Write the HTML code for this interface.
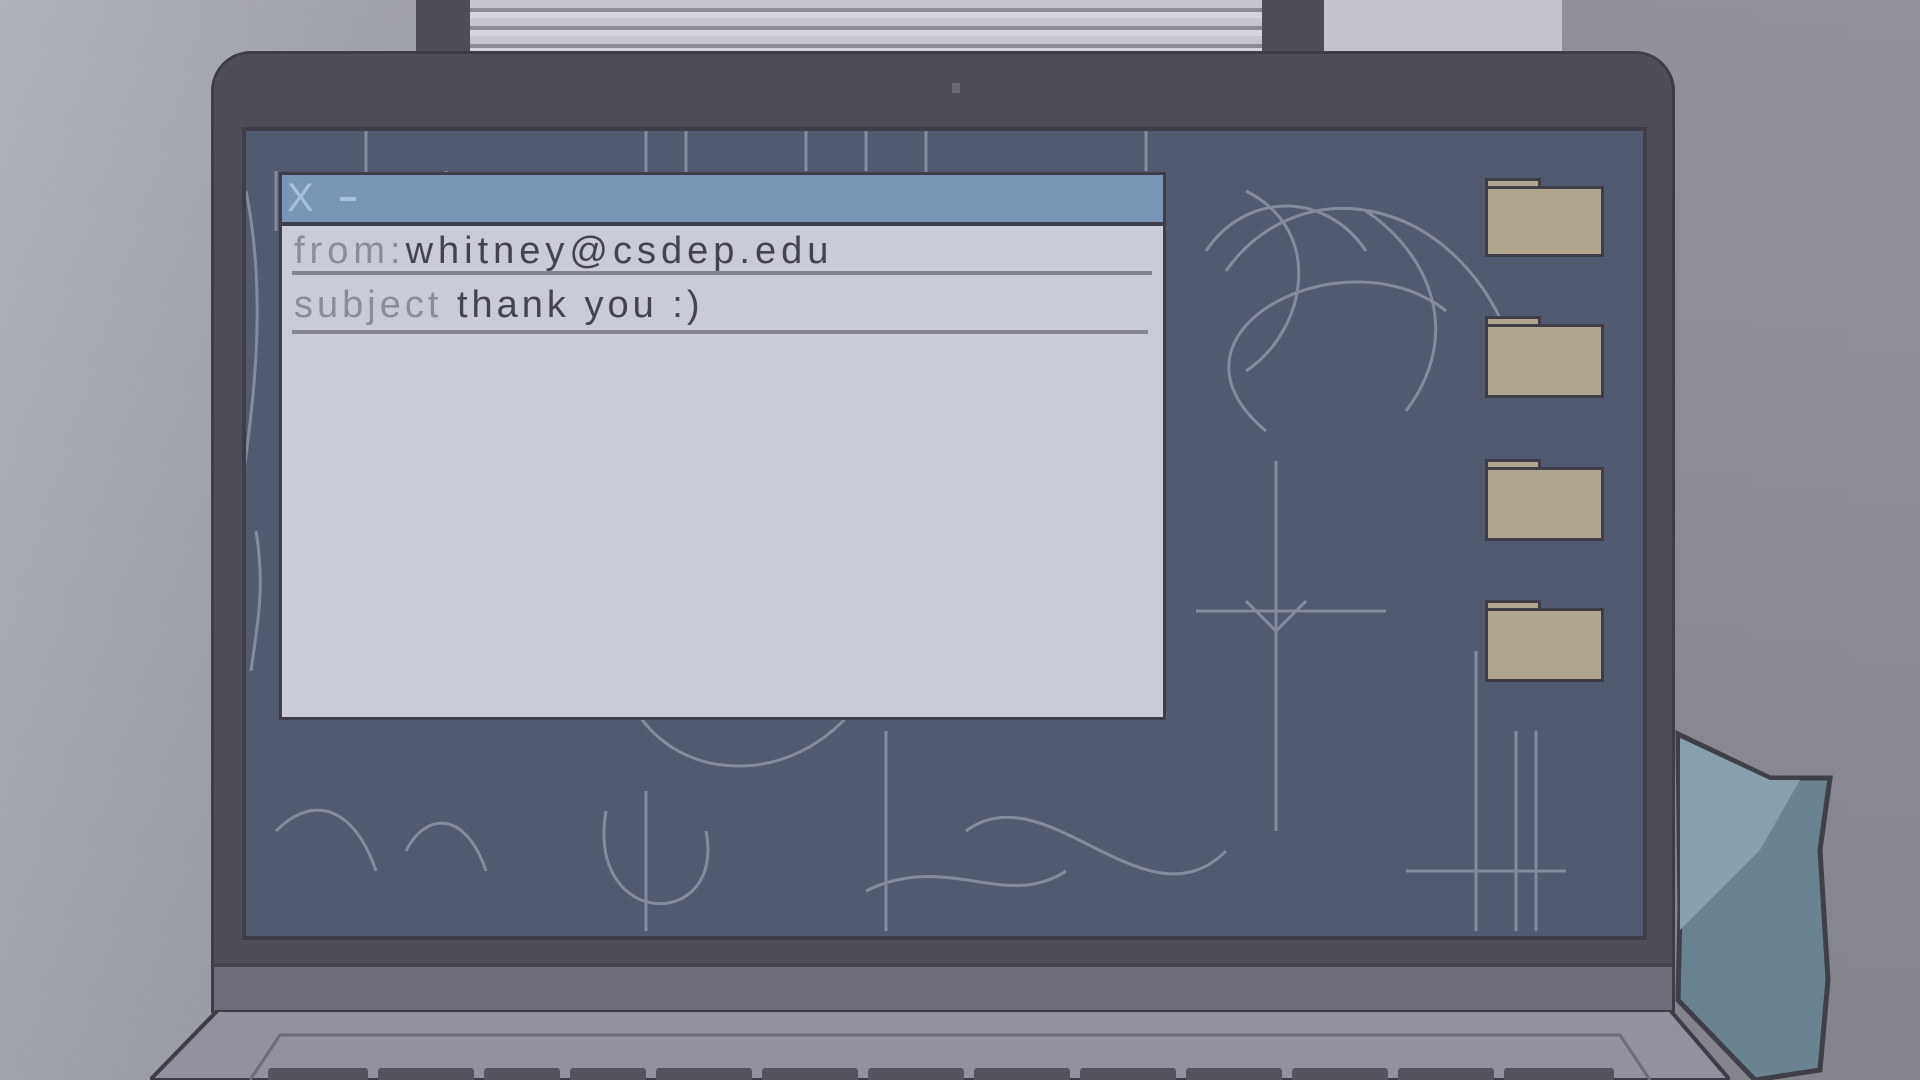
<!DOCTYPE html>
<html><head><meta charset="utf-8"><style>
html,body{margin:0;padding:0}
body{width:1920px;height:1080px;position:relative;overflow:hidden;background:linear-gradient(90deg,#a9acb4 0%,#9a9ca4 20%,#8f9098 50%,#8b8a94 80%,#8c8b95 100%);font-family:"Liberation Sans",sans-serif}
.a{position:absolute}
</style></head><body>
<div class="a" style="left:0;top:0;width:1920px;height:1080px;background:linear-gradient(180deg,rgba(255,255,255,0.06),rgba(0,0,0,0.05))"></div>
<!-- top monitor -->
<div class="a" style="left:416px;top:0;width:908px;height:60px;background:#4e4d56"></div>
<div class="a" style="left:470px;top:0;width:792px;height:55px;background:repeating-linear-gradient(180deg,#c4c5cd 0 8px,#8c8c96 8px 12px,#d4d5dc 12px 18px)"></div>
<div class="a" style="left:1324px;top:0;width:238px;height:55px;background:#c3c4cb"></div>
<!-- teal object -->
<svg class="a" style="left:1660px;top:730px" width="200" height="350"><polygon points="18,4 110,48 170,48 160,120 168,250 160,340 95,350 18,270 20,180 18,4" fill="#6b8390" stroke="#3f3f48" stroke-width="5"/><polygon points="20,8 110,50 140,50 100,120 20,200" fill="#87a0ac"/></svg>
<!-- laptop bezel -->
<div class="a" style="left:211px;top:51px;width:1464px;height:916px;background:#4f4e58;border-radius:40px 40px 0 0;border:3px solid #3e3d46;box-sizing:border-box"></div>
<div class="a" style="left:952px;top:83px;width:8px;height:10px;background:#6a6973"></div>
<!-- screen -->
<div class="a" style="left:242px;top:127px;width:1405px;height:813px;background:#525a70;border:4px solid #3f3e48;box-sizing:border-box;overflow:hidden">
<svg width="1405" height="813" style="opacity:.5" fill="none" stroke="#b5bccb" stroke-width="3">
<path d="M980 140 C1050 40 1200 60 1260 200 M1020 300 C900 200 1100 100 1200 180 M1120 80 c60 40 100 120 40 200 M960 120 c40 -60 120 -60 160 0 M1000 60 c80 40 60 140 0 180"/>
<path d="M1030 330 V700 M950 480 H1140 M1000 470 l30 30 30 -30"/>
<path d="M1230 520 V800 M1160 740 H1320 M1270 600 V800 M1290 600 V800"/>
<path d="M380 560 C420 660 560 660 620 560 M400 660 V800 M360 680 C340 800 480 800 460 700"/>
<path d="M640 600 V800 M720 700 C800 640 900 800 980 720 M620 760 C700 720 760 780 820 740"/>
<path d="M30 40 v60 M120 0 v60 M200 40 v40 M400 0 v50 M440 0 v50 M560 0 v40 M620 0 v40 M680 0 v50 M900 0 v40"/>
<path d="M0 60 c20 100 10 200 -5 300 M10 400 c10 60 0 100 -5 140 M30 700 c40 -40 80 -20 100 40 M160 720 c20 -40 60 -40 80 20"/>
</svg>
</div>
<!-- window -->
<div class="a" style="left:279px;top:172px;width:887px;height:548px;background:#c9ccd6;border:3px solid #3f3e48;box-sizing:border-box">
<div class="a" style="left:0;top:0;width:881px;height:47px;background:#7b95b6;border-bottom:4px solid #3f3e48"></div>
<div class="a" style="left:5px;top:0;font-size:40px;color:#a8c0e0;line-height:47px">X</div>
<div class="a" style="left:58px;top:22px;width:16px;height:4px;background:#a8c0e0"></div>
<div class="a" style="left:12px;top:51px;font-size:38px;line-height:50px;color:#45444e;letter-spacing:5px"><span style="color:#8b8d98">from:</span>whitney@csdep.edu</div>
<div class="a" style="left:10px;top:96px;width:860px;height:4px;background:#86858f"></div>
<div class="a" style="left:12px;top:104px;font-size:38px;line-height:52px;color:#45444e;letter-spacing:4px"><span style="color:#8b8d98">subject</span> thank you :)</div>
<div class="a" style="left:10px;top:155px;width:856px;height:4px;background:#86858f"></div>
</div>
<!-- folders -->
<div class="a" style="left:1485px;top:178px;width:119px;height:79px"><div class="a" style="left:0;top:0;width:50px;height:10px;background:#b0a58f;border:3px solid #3f3e48;border-bottom:0"></div><div class="a" style="left:0;top:8px;width:119px;height:71px;background:#b0a58f;border:3px solid #3f3e48;box-sizing:border-box"></div></div>
<div class="a" style="left:1485px;top:316px;width:119px;height:82px"><div class="a" style="left:0;top:0;width:50px;height:10px;background:#b0a58f;border:3px solid #3f3e48;border-bottom:0"></div><div class="a" style="left:0;top:8px;width:119px;height:74px;background:#b0a58f;border:3px solid #3f3e48;box-sizing:border-box"></div></div>
<div class="a" style="left:1485px;top:459px;width:119px;height:82px"><div class="a" style="left:0;top:0;width:50px;height:10px;background:#b0a58f;border:3px solid #3f3e48;border-bottom:0"></div><div class="a" style="left:0;top:8px;width:119px;height:74px;background:#b0a58f;border:3px solid #3f3e48;box-sizing:border-box"></div></div>
<div class="a" style="left:1485px;top:600px;width:119px;height:82px"><div class="a" style="left:0;top:0;width:50px;height:10px;background:#b0a58f;border:3px solid #3f3e48;border-bottom:0"></div><div class="a" style="left:0;top:8px;width:119px;height:74px;background:#b0a58f;border:3px solid #3f3e48;box-sizing:border-box"></div></div>
<!-- base -->
<div class="a" style="left:211px;top:963px;width:1464px;height:50px;background:#6e6c79;border-left:3px solid #3e3d46;border-right:3px solid #3e3d46;border-top:4px solid #45444d;box-sizing:border-box"></div>
<svg class="a" style="left:150px;top:1010px" width="1580" height="70"><polygon points="68,0 1520,0 1580,70 0,70" fill="#9390a0" stroke="#3e3d46" stroke-width="4"/>
<path d="M100 70 L130 25 H1470 L1500 70" fill="none" stroke="#6e6c79" stroke-width="3"/>
<g fill="#55545e"><rect x="118" y="58" width="100" height="14" rx="3"/><rect x="228" y="58" width="96" height="14" rx="3"/><rect x="334" y="58" width="76" height="14" rx="3"/><rect x="420" y="58" width="76" height="14" rx="3"/><rect x="506" y="58" width="96" height="14" rx="3"/><rect x="612" y="58" width="96" height="14" rx="3"/><rect x="718" y="58" width="96" height="14" rx="3"/><rect x="824" y="58" width="96" height="14" rx="3"/><rect x="930" y="58" width="96" height="14" rx="3"/><rect x="1036" y="58" width="96" height="14" rx="3"/><rect x="1142" y="58" width="96" height="14" rx="3"/><rect x="1248" y="58" width="96" height="14" rx="3"/><rect x="1354" y="58" width="110" height="14" rx="3"/></g></svg>
</body></html>
